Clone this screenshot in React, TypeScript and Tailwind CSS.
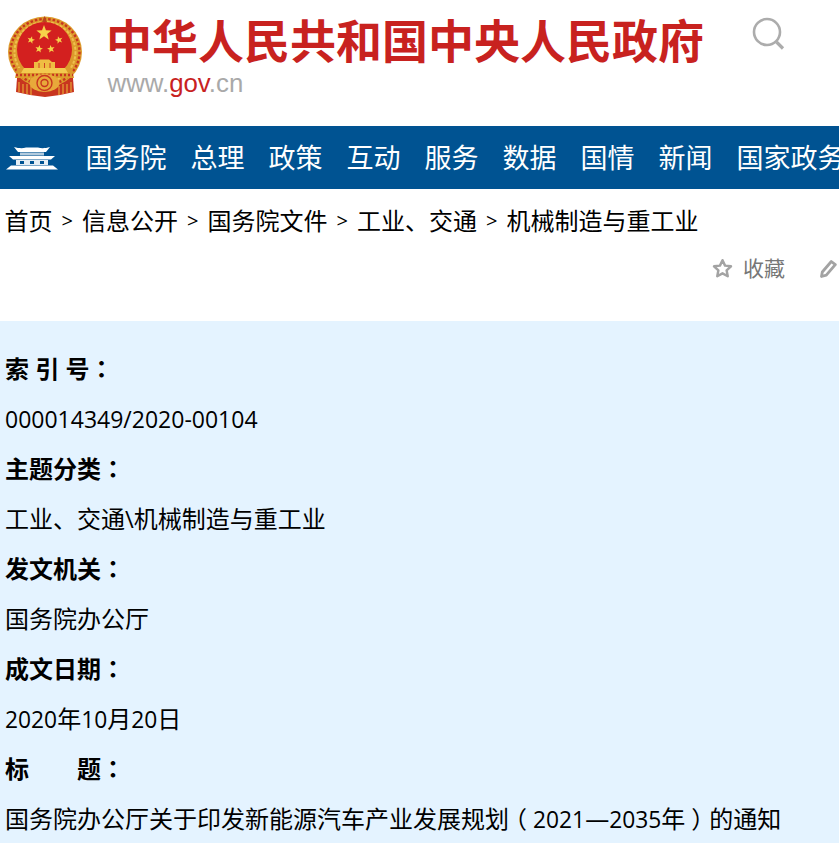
const font = '"Open Sans","Noto Sans CJK SC",sans-serif';

function Star({ cx, cy, r, rot = 0 }: { cx: number; cy: number; r: number; rot?: number }) {
  const pts: string[] = [];
  for (let i = 0; i < 10; i++) {
    const a = ((-90 + rot + i * 36) * Math.PI) / 180;
    const rr = i % 2 === 0 ? r : r * 0.42;
    pts.push(`${(cx + rr * Math.cos(a)).toFixed(2)},${(cy + rr * Math.sin(a)).toFixed(2)}`);
  }
  return <polygon points={pts.join(" ")} fill="#f6d24a" />;
}

function Emblem() {
  return (
    <svg width="76" height="82" viewBox="0 0 76 82" className="block shrink-0">
      <path d="M9 62 L8 76 L22 79 L37 81 L52 79 L66 76 L65 62 Z" fill="#c8351f" />
      <path d="M11 66V76M15 68V77M19 68V78M23 70V79M51 70V79M55 68V78M59 68V77M63 66V76" stroke="#e6a435" strokeWidth="1.200" />
      <ellipse cx="37" cy="36" rx="37" ry="35.500" fill="#dc9a2c" />
      <ellipse cx="37" cy="36" rx="34.500" ry="33" fill="none" stroke="#c8351f" strokeWidth="2.400" strokeDasharray="2.500 2" />
      <ellipse cx="37" cy="36" rx="30.500" ry="30" fill="none" stroke="#efc04e" strokeWidth="2" strokeDasharray="3 1.500" />
      <path d="M36.500 0 L39 6 H34 Z" fill="#b8461e" />
      <circle cx="36.500" cy="33.500" r="27.500" fill="#d3201f" />
      <Star cx={36} cy={17} r={8} />
      <Star cx={23} cy={24} r={4} rot={15} />
      <Star cx={51} cy={24} r={4} rot={-15} />
      <Star cx={31} cy={33} r={4} rot={10} />
      <Star cx={43} cy={33} r={4} rot={-10} />
      <path d="M29 46 L32 43.500 H41 L44 46 H47 V52 H26 V46 Z" fill="#efbd42" />
      <path d="M31 47v5M36.500 47v5M42 47v5" stroke="#c8351f" strokeWidth="0.900" />
      <path d="M9 52 H64 L66 62 H7 Z" fill="#dc9a2c" />
      <path d="M8 59 H65" stroke="#c8351f" strokeWidth="2.500" strokeDasharray="2 2" />
      <path d="M16 52 H57 L60 57 H13 Z" fill="#f3c94e" />
      <ellipse cx="36.500" cy="67" rx="15" ry="9" fill="#e8a93a" />
      <circle cx="36.500" cy="67" r="7.500" fill="none" stroke="#c8351f" strokeWidth="1.400" />
      <circle cx="36.500" cy="67" r="3.500" fill="none" stroke="#c8351f" strokeWidth="1.400" />
    </svg>
  );
}

function Gate() {
  return (
    <svg width="52" height="24" viewBox="0 0 52 24" className="block" fill="#fff">
      <path d="M8 1 C13 2.500 17 2.500 20 1.500 H32 C35 2.500 39 2.500 44 1 L40 6 H12 Z" />
      <rect x="14" y="6.500" width="24" height="3" opacity="0.7" />
      <path d="M3 10 H49 L45 13.500 H7 Z" />
      <path d="M10 14 H42 V19 H10 Z M14 15 V18 H18 V15 Z M24 15 V18 H28 V15 Z M34 15 V18 H38 V15 Z" fillRule="evenodd" opacity="0.9" />
      <path d="M5 19.500 H47 L52 23.500 H0 Z" />
    </svg>
  );
}

const Colon = () => <span style={{ fontFamily: '"Noto Sans CJK TC",sans-serif' }}>：</span>;
const Num = ({ children }: { children: React.ReactNode }) => <span className="text-[22.800px]">{children}</span>;

const nav = ["国务院", "总理", "政策", "互动", "服务", "数据", "国情", "新闻", "国家政务"];
const crumbs = ["首页", "信息公开", "国务院文件", "工业、交通", "机械制造与重工业"];
const rows: [React.ReactNode, React.ReactNode][] = [
  ["索 引 号", <span className="text-[23px]">000014349/2020-00104</span>],
  ["主题分类", "工业、交通\\机械制造与重工业"],
  ["发文机关", "国务院办公厅"],
  ["成文日期", <><Num>2020</Num>年<Num>10</Num>月<Num>20</Num>日</>],
  [
    <>标<span className="inline-block w-[48px]" />题</>,
    <>
      国务院办公厅关于印发新能源汽车产业发展规划
      <span className="inline-block w-[24px] -translate-x-[6px]">（</span>
      <Num>2021</Num>—<Num>2035</Num>年
      <span className="inline-block w-[24px] translate-x-[6px]">）</span>
      的通知
    </>,
  ],
];

export default function App() {
  return (
    <div className="w-[839px] h-[843px] overflow-hidden bg-white text-black [text-spacing-trim:space-all]" style={{ fontFamily: font }}>
      <header className="h-[126px] flex items-start pl-[8px] pt-[16px]">
        <Emblem />
        <div className="ml-[22px] w-[640px] shrink-0 -mt-[4px]">
          <div className="h-[56px] text-[46px] leading-[56px] font-bold text-[#c8221f] whitespace-nowrap">中华人民共和国中央人民政府</div>
          <div className="text-[25.800px] leading-[28px] text-[#a9a9a9] mt-[1px] ml-[1.500px]" style={{ fontFamily: '"Liberation Sans",sans-serif' }}>
            www.<span className="text-[#c8221f]">gov</span>.cn
          </div>
        </div>
        <svg width="34" height="36" viewBox="0 0 34 36" className="ml-[6px] -mt-[1px] shrink-0" fill="none" stroke="#acacac">
          <circle cx="15" cy="17" r="13" strokeWidth="2.600" />
          <path d="M24.500 27 L31 33.500" strokeWidth="3.200" />
        </svg>
      </header>

      <nav className="h-[63px] bg-[#005392] flex items-center overflow-hidden whitespace-nowrap text-white">
        <div className="w-[85.500px] pl-[6px] shrink-0"><Gate /></div>
        <div className="flex gap-[24px] text-[27px] leading-[63px]">
          {nav.map((n) => <span key={n} className="shrink-0">{n}</span>)}
        </div>
      </nav>

      <div className="h-[63px] pl-[4.500px] flex items-center text-[24px] leading-[63px] whitespace-nowrap">
        {crumbs.map((c, i) => (
          <span key={c} className="flex items-center">
            {i > 0 && <span className="w-[29.500px] text-center text-[20px]">&gt;</span>}
            {c}
          </span>
        ))}
      </div>

      <div className="h-[69px] pl-[712px] flex items-start overflow-hidden text-[21px] leading-[28px] text-[#777] whitespace-nowrap pt-[2px]">
        <div className="flex items-center">
          <svg width="21" height="21" viewBox="0 0 24 24" fill="none" stroke="#a3a3a3" strokeWidth="2.800" strokeLinejoin="round" className="shrink-0">
            <path d="M12 2.500l2.900 6.200 6.800.8-5 4.600 1.300 6.700L12 17.500l-6 3.300 1.300-6.700-5-4.600 6.800-.8z" />
          </svg>
          <span className="ml-[10px]">收藏</span>
          <svg width="18" height="19" viewBox="0 0 18 19" className="ml-[35px] shrink-0" fill="none" stroke="#a3a3a3" strokeWidth="2.800" strokeLinejoin="round">
            <path d="M1.500 17.500l.8-4.500 9-10.500 4 3.200-9 10.500z" />
          </svg>
        </div>
      </div>

      <section className="bg-[#e4f3ff] pl-[5px] pt-[23px] h-[522px]">
        {rows.map(([k, v], i) => (
          <div key={i}>
            <div className="h-[50px] text-[24px] leading-[48px] font-bold whitespace-nowrap">{k}<Colon /></div>
            <div className="h-[50px] text-[24px] leading-[50px] whitespace-nowrap">{v}</div>
          </div>
        ))}
      </section>
    </div>
  );
}
